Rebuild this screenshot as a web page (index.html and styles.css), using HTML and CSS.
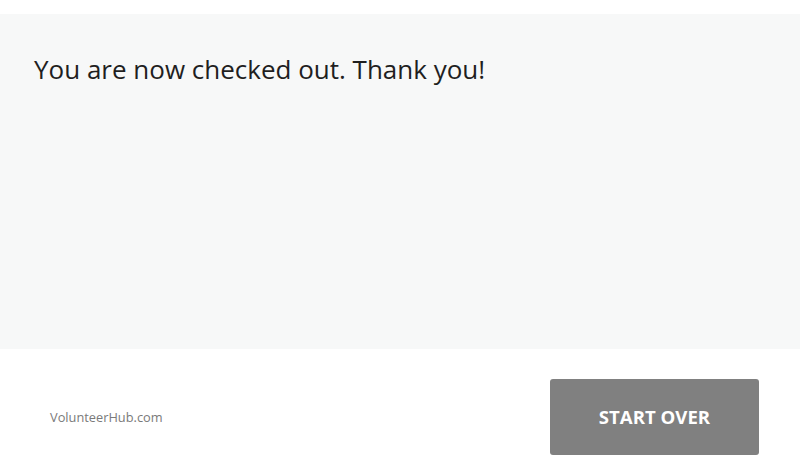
FILE: index.html
```html
<!DOCTYPE html>
<html>
<head>
<meta charset="utf-8">
<link rel="stylesheet" href="styles.css">
</head>
<body>
<div class="page">
  <main class="panel">
    <h1 class="message">You are now checked out. Thank you!</h1>
  </main>
  <footer class="footer">
    <span class="brand">VolunteerHub.com</span>
    <button class="start-over">START OVER</button>
  </footer>
</div>
</body>
</html>
```
FILE: styles.css
```css
html, body {
  margin: 0;
  padding: 0;
  background: #ffffff;
  font-family: "Open Sans", "Noto Sans", sans-serif;
}
.page {
  width: 800px;
  padding-top: 14px;
}
.panel {
  background: #f7f8f8;
  height: 335px;
  box-sizing: border-box;
  padding: 37px 34px 0 34px;
}
.message {
  margin: 0;
  font-weight: 400;
  font-size: 26px;
  line-height: 36px;
  color: #1f1f1f;
}
.footer {
  display: flex;
  align-items: center;
  justify-content: space-between;
  padding: 30px 41px 0 50px;
}
.brand {
  font-size: 12.8px;
  color: #7a7a7a;
}
.start-over {
  width: 209px;
  height: 76px;
  background: #808080;
  border: none;
  border-radius: 3px;
  color: #ffffff;
  font-family: "Open Sans", "Noto Sans", sans-serif;
  font-weight: 700;
  font-size: 18.6px;
  padding: 0 0 2px 0;
}
```
